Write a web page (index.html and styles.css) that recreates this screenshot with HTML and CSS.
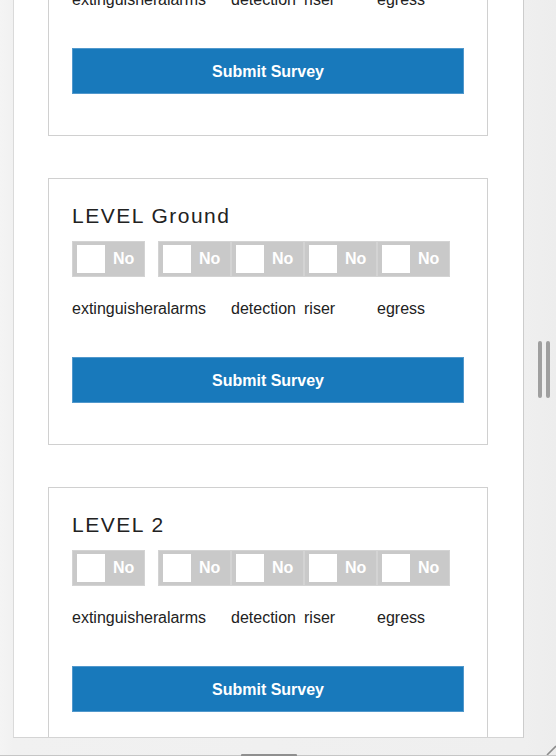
FILE: index.html
```html
<!DOCTYPE html>
<html>
<head>
<meta charset="utf-8">
<link rel="stylesheet" href="styles.css">
</head>
<body>
<div class="frame">
  <div class="main-row">
    <div class="gutter"></div>
    <div class="panel">
      <div class="scroll">
        <section class="card">
          <h2 class="level">LEVEL 1</h2>
          <div class="toggles">
            <div class="toggle"><span class="knob"></span><span class="state">No</span></div>
            <div class="group">
              <div class="toggle"><span class="knob"></span><span class="state">No</span></div>
              <div class="toggle"><span class="knob"></span><span class="state">No</span></div>
              <div class="toggle"><span class="knob"></span><span class="state">No</span></div>
              <div class="toggle"><span class="knob"></span><span class="state">No</span></div>
            </div>
          </div>
          <div class="labels">
            <span class="lbl first">extinguisher</span><span class="lbl">alarms</span><span class="lbl">detection</span><span class="lbl">riser</span><span class="lbl">egress</span>
          </div>
          <button class="submit">Submit Survey</button>
        </section>
        <section class="card">
          <h2 class="level">LEVEL Ground</h2>
          <div class="toggles">
            <div class="toggle"><span class="knob"></span><span class="state">No</span></div>
            <div class="group">
              <div class="toggle"><span class="knob"></span><span class="state">No</span></div>
              <div class="toggle"><span class="knob"></span><span class="state">No</span></div>
              <div class="toggle"><span class="knob"></span><span class="state">No</span></div>
              <div class="toggle"><span class="knob"></span><span class="state">No</span></div>
            </div>
          </div>
          <div class="labels">
            <span class="lbl first">extinguisher</span><span class="lbl">alarms</span><span class="lbl">detection</span><span class="lbl">riser</span><span class="lbl">egress</span>
          </div>
          <button class="submit">Submit Survey</button>
        </section>
        <section class="card">
          <h2 class="level">LEVEL 2</h2>
          <div class="toggles">
            <div class="toggle"><span class="knob"></span><span class="state">No</span></div>
            <div class="group">
              <div class="toggle"><span class="knob"></span><span class="state">No</span></div>
              <div class="toggle"><span class="knob"></span><span class="state">No</span></div>
              <div class="toggle"><span class="knob"></span><span class="state">No</span></div>
              <div class="toggle"><span class="knob"></span><span class="state">No</span></div>
            </div>
          </div>
          <div class="labels">
            <span class="lbl first">extinguisher</span><span class="lbl">alarms</span><span class="lbl">detection</span><span class="lbl">riser</span><span class="lbl">egress</span>
          </div>
          <button class="submit">Submit Survey</button>
        </section>
      </div>
    </div>
    <div class="side">
      <div class="grip"><span class="bar"></span><span class="bar"></span></div>
    </div>
  </div>
  <div class="bottom">
    <div class="bottom-line"><span class="handle"></span></div>
    <svg class="corner" width="10" height="10" viewBox="0 0 10 10"><path d="M10 1 L1 10" stroke="#8c8c8c" stroke-width="1.6"/></svg>
  </div>
</div>
</body>
</html>
```

FILE: styles.css
```css
html, body {
  margin: 0;
  padding: 0;
}
body {
  width: 556px;
  height: 756px;
  overflow: hidden;
  background: linear-gradient(to right, #f4f4f4 0px, #f1f1f1 13px, #efefef 524px, #ededed 556px);
  font-family: "Liberation Sans", Arial, sans-serif;
}
.frame {
  display: flex;
  flex-direction: column;
  height: 756px;
  position: relative;
}
.main-row {
  display: flex;
  height: 738px;
}
.gutter {
  width: 13px;
  flex: none;
}
.panel {
  width: 509px;
  flex: none;
  background: #ffffff;
  border-left: 1px solid #dadada;
  border-right: 1px solid #cccccc;
  border-bottom: 1px solid #d4d4d4;
  overflow: hidden;
}
.scroll {
  margin-top: -131px;
}
.card {
  width: 392px;
  margin: 0 0 42px 34px;
  padding: 25px 23px 41px 23px;
  border: 1px solid #d0d0d0;
  background: #ffffff;
}
.level {
  margin: 0;
  font-size: 21px;
  line-height: 24px;
  font-weight: normal;
  letter-spacing: 1.5px;
  color: #222222;
}
.toggles {
  display: flex;
  margin-top: 13px;
  height: 36px;
}
.group {
  display: flex;
  margin-left: 13px;
}
.toggle {
  box-sizing: border-box;
  width: 73px;
  height: 36px;
  background: #c9c9c9;
  border: 1px solid #d3d3d3;
  display: flex;
  align-items: center;
  padding-left: 4px;
}
.knob {
  width: 28px;
  height: 28px;
  background: #ffffff;
  flex: none;
}
.state {
  margin-left: 8px;
  color: #ffffff;
  font-weight: bold;
  font-size: 16px;
  line-height: 18px;
}
.labels {
  display: flex;
  margin-top: 23px;
  height: 18px;
  font-size: 16px;
  line-height: 18px;
  color: #222222;
  white-space: nowrap;
}
.lbl {
  width: 73px;
  flex: none;
}
.lbl.first {
  width: 86px;
}
.submit {
  display: block;
  box-sizing: border-box;
  width: 392px;
  height: 46px;
  margin-top: 39px;
  padding: 2px 0 0 0;
  background: #1879bb;
  border: 1px solid #5198cc;
  color: #ffffff;
  font-family: "Liberation Sans", Arial, sans-serif;
  font-weight: bold;
  font-size: 16px;
  text-align: center;
}
.side {
  flex: 1;
  display: flex;
  align-items: center;
  padding-left: 14px;
}
.grip {
  display: flex;
  gap: 4px;
  height: 57px;
}
.bar {
  width: 4px;
  height: 57px;
  background: #9f9f9f;
  border-radius: 2px;
}
.bottom {
  height: 18px;
  display: flex;
  flex-direction: column;
  justify-content: flex-end;
}
.bottom-line {
  height: 1px;
  background: #c6c6c6;
  display: flex;
  justify-content: flex-start;
  padding-left: 241px;
}
.handle {
  width: 56px;
  height: 2px;
  margin-top: -1px;
  background: #8f8f8f;
  border-radius: 1px 1px 0 0;
}
.corner {
  position: absolute;
  right: 0;
  bottom: 1px;
}
```
